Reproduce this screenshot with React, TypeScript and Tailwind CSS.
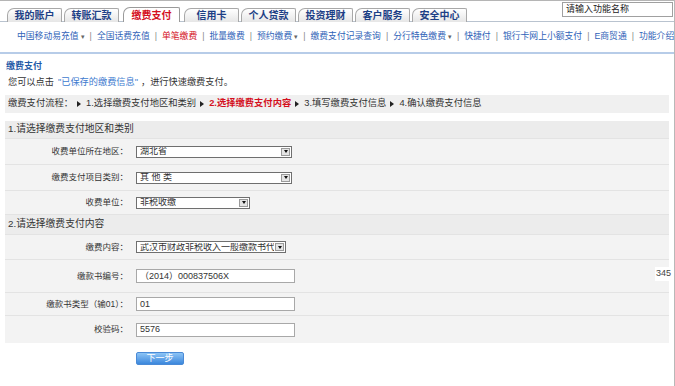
import React from "react";

const tabs = ["我的账户", "转账汇款", "缴费支付", "信用卡", "个人贷款", "投资理财", "客户服务", "安全中心"];

const subNav: { label: string; red?: boolean; drop?: boolean }[] = [
  { label: "中国移动易充值", drop: true },
  { label: "全国话费充值" },
  { label: "单笔缴费", red: true },
  { label: "批量缴费" },
  { label: "预约缴费", drop: true },
  { label: "缴费支付记录查询" },
  { label: "分行特色缴费", drop: true },
  { label: "快捷付" },
  { label: "银行卡网上小额支付" },
  { label: "E商贸通" },
  { label: "功能介绍" },
];

function Arrow() {
  return (
    <span className="ml-[4px] mr-[5px] inline-block h-0 w-0 border-y-[3px] border-l-[4px] border-y-transparent border-l-[#222] align-middle" />
  );
}

function Select({ value, width }: { value: string; width: string }) {
  return (
    <div className={`flex h-[12px] items-center justify-between border border-[#6f6f6f] bg-white pl-[3px] pr-[1px] ${width}`}>
      <span className="min-w-0 overflow-hidden whitespace-nowrap leading-none">{value}</span>
      <span className="ml-[1px] flex h-[8px] w-[9px] shrink-0 items-center justify-center border border-[#9a9a9a] bg-[#e4e4e4]">
        <span className="h-0 w-0 border-x-[2.5px] border-t-[3px] border-x-transparent border-t-[#111]" />
      </span>
    </div>
  );
}

function Input({ value }: { value: string }) {
  return (
    <div className="flex h-[14px] w-[159px] items-center border border-[#a8a8a8] bg-white pl-[3px] leading-none">
      {value}
    </div>
  );
}

function Row({ label, h, children }: { label: string; h: string; children: React.ReactNode }) {
  return (
    <div className={`flex items-center border-t border-[#e3e3e3] bg-[#f3f3f3] ${h}`}>
      <div className="w-[123px] shrink-0 text-right text-[8.5px]">{label}</div>
      <div className="ml-[8px]">{children}</div>
    </div>
  );
}

export default function App() {
  return (
    <div className="relative h-[386px] w-[675px] overflow-hidden border-r border-[#b8b8b8] bg-white font-['Liberation_Sans','Noto_Sans_CJK_SC',sans-serif] text-[9px] text-[#333]">
      <div className="h-[1px] bg-[#b5b5b5]" />

      {/* top tabs + search */}
      <div className="flex h-[21px] items-start justify-between border-b border-[#b9c3cf]">
        <div className="ml-[7px] mt-[6px] flex items-end gap-[2px]">
          {tabs.map((t, i) => (
            <div
              key={t}
              className={
                i === 2
                  ? "mx-[2px] flex h-[15px] w-[57px] items-center justify-center rounded-tl-[7px] rounded-tr-[2px] border border-b-0 border-[#9a9a9a] bg-white text-[10px] font-bold text-[#d4101e]"
                  : "flex h-[14px] w-[55px] items-center justify-center rounded-tl-[7px] rounded-tr-[2px] border border-b-0 border-[#a8a8a8] bg-gradient-to-b from-white to-[#e6e6e6] text-[10px] font-bold text-[#1d3f86]"
              }
            >
              {t}
            </div>
          ))}
        </div>
        <div className="mr-[1px] mt-[1px] flex h-[15px] w-[111px] items-center border border-[#a0a0a0] bg-white pl-[3px] text-[#222]">
          请输入功能名称
        </div>
      </div>

      {/* sub navigation */}
      <div className="flex h-[30px] items-center whitespace-nowrap pl-[17px] text-[8.8px] text-[#2f63b8]">
        {subNav.map((n, i) => (
          <span key={n.label} className="flex items-center">
            {i > 0 && <span className="mx-[5px] text-[#8a8a8a]">|</span>}
            <span className={n.red ? "text-[#d4101e]" : ""}>{n.label}</span>
            {n.drop && <span className="ml-[2px] text-[7px] text-[#666]">▾</span>}
          </span>
        ))}
      </div>
      <div className="h-[2px] bg-[#b7cce8]" />

      <div className="px-[5px]">
        <div className="mt-[5px] flex h-[16px] items-center pl-[1px] font-bold text-[#1f5aa6]">缴费支付</div>
        <div className="flex h-[16px] items-center pl-[3px] text-[9.2px]">
          您可以点击
          <span className="ml-[4px] text-[#3d7bcf]">"已保存的缴费信息"</span>
          <span className="ml-[3px]">，进行快速缴费支付。</span>
        </div>

        <div className="mt-[4px] flex h-[18px] items-center whitespace-nowrap bg-[#f0f0f0] pl-[3px] text-[9.3px]">
          缴费支付流程：
          <Arrow />
          1.选择缴费支付地区和类别
          <Arrow />
          <span className="font-bold text-[#d4101e]">2.选择缴费支付内容</span>
          <Arrow />
          3.填写缴费支付信息
          <Arrow />
          4.确认缴费支付信息
        </div>

        <div className="mt-[8px] flex h-[17px] items-center bg-[#ececec] pl-[3px] text-[9.8px]">1.请选择缴费支付地区和类别</div>
        <Row label="收费单位所在地区：" h="h-[26px]">
          <Select value="湖北省" width="w-[156px]" />
        </Row>
        <Row label="缴费支付项目类别：" h="h-[26px]">
          <Select value="其 他 类" width="w-[156px]" />
        </Row>
        <Row label="收费单位：" h="h-[24px]">
          <Select value="非税收缴" width="w-[114px]" />
        </Row>

        <div className="flex h-[20px] items-center border-t border-[#e3e3e3] bg-[#ececec] pl-[3px] text-[9.8px]">2.请选择缴费支付内容</div>
        <Row label="缴费内容：" h="h-[25px]">
          <Select value="武汉市财政非税收入一般缴款书代收" width="w-[150px]" />
        </Row>
        <div className="relative">
          <Row label="缴款书编号：" h="h-[33px]">
            <Input value="（2014）000837506X" />
          </Row>
          <span className="absolute right-[-3px] top-[8px] bg-white px-[1px] text-[#444]">345</span>
        </div>
        <Row label="缴款书类型（输01）：" h="h-[23px]">
          <Input value="01" />
        </Row>
        <Row label="校验码：" h="h-[28px]">
          <Input value="5576" />
        </Row>

        <div className="ml-[131px] mt-[9px] flex h-[13px] w-[48px] items-center justify-center rounded-[2px] border border-[#4a8ad6] bg-gradient-to-b from-[#8cc4f5] to-[#3b87dc] text-white">
          下一步
        </div>
      </div>
    </div>
  );
}
